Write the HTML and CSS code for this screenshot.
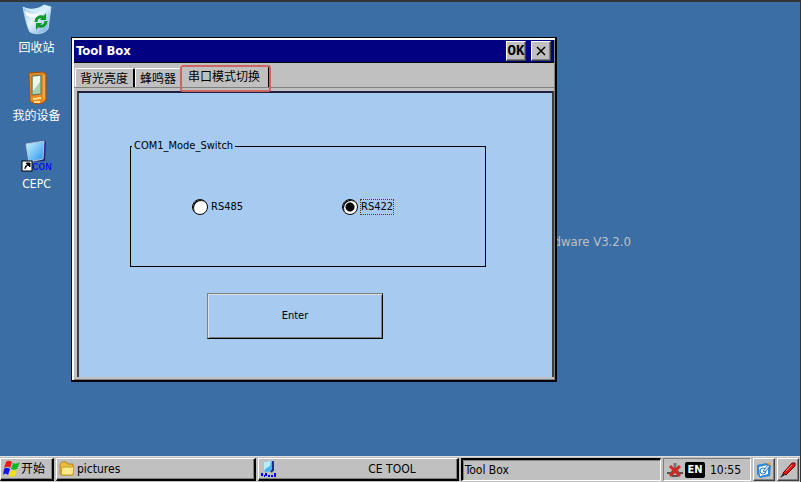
FILE: index.html
```html
<!DOCTYPE html>
<html lang="zh-CN">
<head>
  <meta charset="UTF-8" />
  <meta name="viewport" content="width=device-width, initial-scale=1.0"/>
  <title>Tool Box</title>
  <link rel="stylesheet" href="styles.css">
</head>
<body>
  <main class="desktop">
    <!-- Desktop icons -->
    <div class="icons">
      <div class="icon">
        <svg width="32" height="32" viewBox="0 0 32 32">
          <defs>
            <linearGradient id="bin" x1="0" y1="0" x2="1" y2="1">
              <stop offset="0" stop-color="#8cc4ea"/><stop offset=".45" stop-color="#e6f5ff"/><stop offset="1" stop-color="#5fa3dc"/>
            </linearGradient>
          </defs>
          <path d="M2 3C9 7 18 5 23 1l7 2-3 22c-4 5-12 6-18 3-3-5-5-15-7-25z" fill="url(#bin)" stroke="#b5daf3"/>
          <path d="M2 3c8 4 16 2 21-2l7 2c-6 5-19 8-28 0z" fill="#d3ecfa"/>
          <path d="M4 7c6 4 11 4 15 2l-3 4c-5 1-8 0-11-2z" fill="#fff"/>
          <path d="M15 18c0-4 3-6 7-5M25 17c0 4-3 6-7 5" fill="none" stroke="#0c9a2c" stroke-width="3"/>
          <path d="M25 9v7h-6zM15 26v-7h6z" fill="#0c9a2c"/>
        </svg>
        <span>回收站</span>
      </div>
      <div class="icon">
        <svg width="32" height="32" viewBox="0 0 32 32">
          <path d="M8 1l14-1 3 2v26c-3 5-12 5-16 1z" fill="#e58a25" stroke="#9a5311"/>
          <path d="M11 4l9-1v19l-9 1z" fill="#a6cfae" stroke="#6a6f48"/>
          <path d="M12 5l7-1v6l-7 9z" fill="#ecf8e8"/>
          <path d="M12 27l8-1M13 30h6" stroke="#ffdc82" stroke-width="2"/>
          <path d="M23 3v24" stroke="#f6c36d"/>
        </svg>
        <span>我的设备</span>
      </div>
      <div class="icon">
        <svg width="32" height="32" viewBox="0 0 32 32">
          <defs>
            <linearGradient id="screen" x1="0" y1="0" x2="1" y2="1">
              <stop offset="0" stop-color="#cff5ff"/><stop offset="1" stop-color="#2292ef"/>
            </linearGradient>
          </defs>
          <path d="M6 4L23 0l2 2-1 19-15 1z" fill="#23277c"/>
          <path d="M5 4l18-3-1 18-14 3z" fill="url(#screen)" stroke="#b9c3dd"/>
          <text x="11" y="30" class="icon-text">CON</text>
          <rect x="1" y="21" width="10" height="10" fill="#fff" stroke="#000"/>
          <path d="M4 29c0-3 1-4 3-4M5 23h4v4z" fill="#000" stroke="#000"/>
        </svg>
        <span>CEPC</span>
      </div>
    </div>

    <p class="version">Hardware V3.2.0</p>

    <!-- Tool Box dialog -->
    <form class="window">
      <header class="titlebar">
        <h1>Tool Box</h1>
        <button type="button" class="caption-btn">OK</button>
        <button type="button" class="caption-btn" aria-label="Close">
          <svg width="10" height="10" viewBox="0 0 10 10"><path d="M1 1l8 8M9 1l-8 8" stroke="#000" stroke-width="1.500"/></svg>
        </button>
      </header>
      <div class="tabs" role="tablist">
        <button type="button" class="tab" role="tab">背光亮度</button>
        <button type="button" class="tab" role="tab">蜂鸣器</button>
        <button type="button" class="tab active" role="tab" aria-selected="true">串口模式切换</button>
      </div>
      <div class="page">
        <fieldset class="group">
          <legend>COM1_Mode_Switch</legend>
          <label class="option"><input type="radio" name="mode"><span>RS485</span></label>
          <label class="option"><input type="radio" name="mode" checked><span class="focused">RS422</span></label>
        </fieldset>
        <button type="button" class="enter">Enter</button>
      </div>
    </form>
  </main>

  <footer class="taskbar">
    <button type="button" class="start">
      <svg width="17" height="18" viewBox="0 0 17 18">
        <path d="M3 2c2-2 4-1 6 0L7 8C5 6 3 7 1 8z" fill="#f01818"/>
        <path d="M10 3c2 1 4 1 7-1l-3 7c-2 1-4 1-6 0z" fill="#0cb81c"/>
        <path d="M1 9c2-2 4-1 6 0l-2 6c-2-2-4-1-5 0z" fill="#1414e6"/>
        <path d="M8 10c2 1 4 1 6 0l-2 6c-2 1-4 1-6 0z" fill="#f0e010"/>
      </svg>
      <span>开始</span>
    </button>
    <button type="button" class="task">
      <svg width="16" height="16" viewBox="0 0 16 16">
        <path d="M1 3l2-2h4l2 2h5v11H2l-1-1z" fill="#edbd3c" stroke="#b08416"/>
        <path d="M3 6h12l-1 8H2z" fill="#ffe98c" stroke="#c49a28"/>
      </svg>
      <span>pictures</span>
    </button>
    <button type="button" class="task">
      <svg width="16" height="16" viewBox="0 0 16 16">
        <path d="M3 1l9-1v10l-8 1z" fill="#44b4f0"/><path d="M3 1l7-1-1 5-6 4z" fill="#b5ebfb"/>
        <path d="M12 0v9l-2 2" fill="none" stroke="#1d2f86" stroke-width="2"/>
        <path d="M1 12v3M3 15h1M5 12v3M7 15h2M10 15h2M14 12v4" stroke="#0000f0" stroke-width="2"/>
      </svg>
      <span class="centered">CE TOOL</span>
    </button>
    <button type="button" class="task pressed"><span>Tool Box</span></button>
    <div class="tray">
      <svg width="16" height="16" viewBox="0 0 16 16">
        <path d="M8 1v6" stroke="#777" stroke-width="3"/>
        <path d="M0 11h4l4-4 4 4h4M5 14h6" fill="none" stroke="#555" stroke-width="2"/>
        <path d="M3 4l10 10M13 4L3 14" stroke="#d42a22" stroke-width="3"/>
      </svg>
      <span class="lang">EN</span>
      <time>10:55</time>
    </div>
    <button type="button" class="tool" aria-label="Desktop">
      <svg width="16" height="16" viewBox="0 0 16 16">
        <path d="M1 3l9-2 5 2-1 11-10 2-3-4z" fill="#3289cf"/>
        <path d="M3 5l9-2v9l-8 2z" fill="#fff"/>
        <circle cx="7" cy="9" r="3" fill="none" stroke="#2279bf"/>
        <path d="M7 9l5-6 2 1-5 6z" fill="#e5f3fb" stroke="#2872ab"/>
        <path d="M12 1l3 2" stroke="#e9a43c" stroke-width="2"/>
      </svg>
    </button>
    <button type="button" class="tool" aria-label="Pen input">
      <svg width="16" height="16" viewBox="0 0 16 16">
        <path d="M0 16l3-5 2 2z" fill="#222"/>
        <path d="M3 11l9-10h3v3l-9 9z" fill="#e01515" stroke="#650b0b"/>
        <path d="M6 9l6-6" stroke="#ff8c80"/>
      </svg>
    </button>
  </footer>
</body>
</html>
```
FILE: styles.css
```css
* {
  box-sizing: border-box;
}

body {
  margin: 0;
  height: 100vh;
  display: flex;
  flex-direction: column;
  border-top: 2px solid #333333;
  border-right: 1px solid #333333;
  background: #3a6ea5;
  color: #000;
  font-family: "DejaVu Sans Condensed", "Noto Sans CJK SC", sans-serif;
  font-size: 12px;
  line-height: 16px;
}

button {
  font: inherit;
  color: inherit;
  padding: 0;
  border: none;
  border-radius: 0;
  background: #c0c0c0;
}

svg {
  display: block;
  flex: none;
}

.desktop {
  position: relative;
  flex: 1;
}

/* Desktop icons */
.icons {
  width: 73px;
  padding-top: 2px;
  display: flex;
  flex-direction: column;
  gap: 16px;
}

.icon {
  display: flex;
  flex-direction: column;
  align-items: center;
  gap: 4px;
  color: #fff;
}

.icon svg {
  overflow: visible;
}

.icon-text {
  font: 11px "Liberation Mono", monospace;
  fill: #0000f0;
}

.version {
  position: absolute;
  top: 232px;
  left: 533px;
  margin: 0;
  color: #c0c0c0;
  font-size: 13px;
}

/* Dialog */
.window {
  position: absolute;
  top: 35px;
  left: 71px;
  width: 486px;
  background: #c0c0c0;
  border: 1px solid #000;
  border-right-width: 2px;
  border-bottom-width: 2px;
  box-shadow: inset 2px 2px #fff, inset -1px -1px #808080;
  padding: 2px 1px 3px 2px;
}

.titlebar {
  display: flex;
  align-items: center;
  gap: 5px;
  height: 23px;
  padding: 0 3px 0 2px;
  background: #000080;
  border-bottom: 1px solid #000;
}

.titlebar h1 {
  flex: 1;
  margin: 0;
  color: #fff;
  font-size: 13px;
}

.caption-btn {
  display: flex;
  align-items: center;
  justify-content: center;
  width: 20px;
  height: 20px;
  font-family: "Liberation Mono", monospace;
  font-size: 14px;
  font-weight: bold;
  border: 1px solid #fff;
  border-right-color: #404040;
  border-bottom-color: #404040;
  box-shadow: inset -1px -1px #808080;
}

.tabs {
  display: flex;
  align-items: flex-end;
  height: 25px;
  padding-left: 1px;
  border-bottom: 1px solid #808080;
}

.tab {
  height: 19px;
  padding: 2px 5px 0 4px;
  border: 1px solid #fff;
  border-right: 2px solid #000;
  border-bottom: none;
  border-radius: 2px 2px 0 0;
}

.tab.active {
  position: relative;
  height: 22px;
  margin-left: -3px;
  padding: 0 8px 0 7px;
}

.tab.active::after {
  content: "";
  position: absolute;
  inset: -1px -3px -5px -1px;
  border: 2px solid #cd6464;
  border-radius: 3px;
}

.page {
  display: flex;
  flex-direction: column;
  gap: 26px;
  margin: 3px 0 0 3px;
  padding: 45px 66px 38px 51px;
  background: #a6caf0;
  border: 2px solid #404040;
  border-top-color: #202040;
  border-bottom: none;
}

.group {
  width: 100%;
  height: 129px;
  margin: 0;
  padding: 45px 60px 0 61px;
  display: grid;
  grid-template-columns: 150px 1fr;
  border: 1px solid #000;
  font-size: 11px;
}

.group legend {
  margin-left: -60px;
  padding: 0 2px;
}

.option {
  display: flex;
  align-items: center;
  gap: 2px;
  height: 16px;
}

.option input {
  appearance: none;
  width: 16px;
  height: 16px;
  margin: 0;
  border: 1px solid #000;
  border-radius: 50%;
  background: #fff;
  box-shadow: inset 1px 1px #000;
}

.option input:checked {
  background: radial-gradient(circle, #000 4px, #fff 5px);
}

.option span {
  padding: 0;
  line-height: 14px;
  border: 1px solid transparent;
}

.option .focused {
  border: 1px dotted #5b3a1c;
}

.enter {
  width: 176px;
  height: 46px;
  margin-left: 77px;
  background: #a6caf0;
  font-size: 11px;
  border: 1px solid #808080;
  border-right-color: #000;
  border-bottom-color: #000;
  box-shadow: inset 1px 1px #e0e0e0, inset -1px -1px #808080;
}

/* Taskbar */
.taskbar {
  display: flex;
  gap: 2px;
  height: 26px;
  padding: 1px 1px 1px 0;
  background: #c0c0c0;
  border-top: 1px solid #e0e0e0;
}

.start,
.task,
.tool {
  display: flex;
  align-items: center;
  gap: 2px;
  padding: 0 2px;
  border: 1px solid #fff;
  border-right: 2px solid #000;
  border-bottom: 2px solid #000;
  box-shadow: inset -1px -1px #808080;
}

.start {
  width: 54px;
  gap: 1px;
}

.task {
  flex: 1;
  text-align: left;
}

.task .centered {
  flex: 1;
  text-align: center;
  padding-left: 50px;
}

.task.pressed {
  border: 2px solid #000;
  border-right: 1px solid #fff;
  border-bottom: 1px solid #fff;
  box-shadow: inset 1px 1px #808080;
}

.tray {
  display: flex;
  align-items: center;
  gap: 2px;
  width: 88px;
  padding: 0 3px;
  border: 1px solid #808080;
  border-right-color: #fff;
  border-bottom-color: #fff;
}

.tray time {
  margin-left: 3px;
}

.lang {
  width: 20px;
  border-radius: 2px;
  background: #000;
  color: #fff;
  font-size: 11px;
  font-weight: bold;
  line-height: 16px;
  text-align: center;
}

.tool {
  width: 22px;
  padding: 0 2px;
  border-right: 1px solid #404040;
  border-bottom: 1px solid #404040;
}
```
